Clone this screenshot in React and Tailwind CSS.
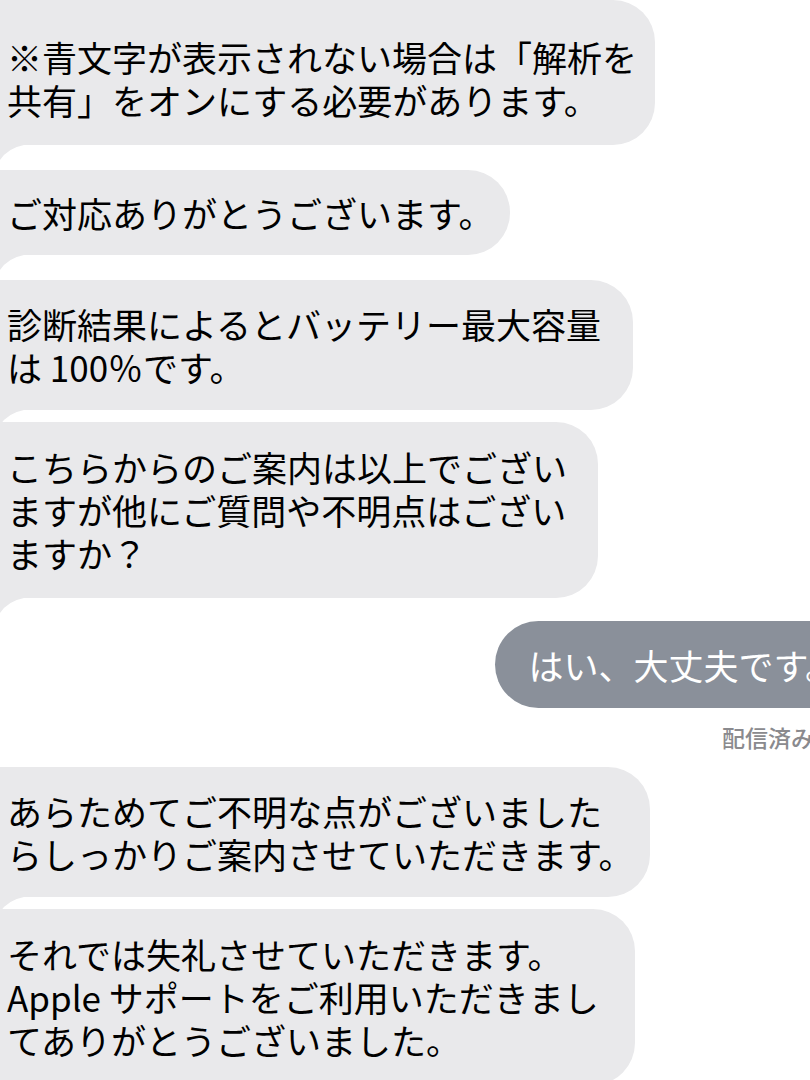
import React from "react";

const received = [
  { w: "w-[655px]", pad: "pt-[35px] pb-[24px]", mt: "mt-0", lines: ["※青文字が表示されない場合は「解析を", "共有」をオンにする必要があります。"] },
  { w: "w-[510px]", pad: "py-[21px]", mt: "mt-[25px]", lines: ["ご対応ありがとうございます。"] },
  { w: "w-[633px]", pad: "py-[22px]", mt: "mt-[25px]", lines: ["診断結果によるとバッテリー最大容量", "は 100％です。"] },
  { w: "w-[598px]", pad: "pt-[23px] pb-[24px]", mt: "mt-[12px]", lines: ["こちらからのご案内は以上でござい", "ますが他にご質問や不明点はござい", "ますか？"] },
];

const received2 = [
  { w: "w-[650px]", pad: "py-[22px]", mt: "mt-[16px]", lines: ["あらためてご不明な点がございました", "らしっかりご案内させていただきます。"] },
  { w: "w-[635px]", pad: "pt-[23px] pb-[24px]", mt: "mt-[12px]", lines: ["それでは失礼させていただきます。", "Apple サポートをご利用いただきまし", "てありがとうございました。"] },
];

function Tail() {
  return (
    <svg className="absolute left-0 top-full" width="24" height="16" viewBox="0 0 24 16">
      <path d="M0 0 H24 Q8 3 0 15 Z" fill="#e9e9eb" />
    </svg>
  );
}

function Bubble({ b }) {
  return (
    <div className={`relative ${b.mt} ${b.w} ${b.pad} bg-[#e9e9eb] rounded-r-[42px] pl-[7px] text-[35px] leading-[43px] text-black whitespace-nowrap`}>
      {b.lines.map((l, i) => (
        <div key={i}>{l}</div>
      ))}
      <Tail />
    </div>
  );
}

export default function App() {
  return (
    <div
      className="w-[810px] h-[1080px] overflow-hidden bg-white flex flex-col"
      style={{ fontFamily: '"Noto Sans CJK JP", "Noto Sans", sans-serif' }}
    >
      {received.map((b, i) => (
        <Bubble key={i} b={b} />
      ))}

      <div className="mt-[23px] flex justify-end">
        <div className="-mr-[60px] bg-[#8a909a] rounded-l-[44px] pl-[33px] pr-[30px] py-[22px] text-[35px] leading-[43px] text-white whitespace-nowrap">
          はい、大丈夫です。
        </div>
      </div>
      <div className="mt-[15px] flex justify-end">
        <div className="-mr-[4px] text-[23px] leading-[28px] font-medium text-[#8a8a8e] whitespace-nowrap">配信済み</div>
      </div>

      {received2.map((b, i) => (
        <Bubble key={i} b={b} />
      ))}
    </div>
  );
}
